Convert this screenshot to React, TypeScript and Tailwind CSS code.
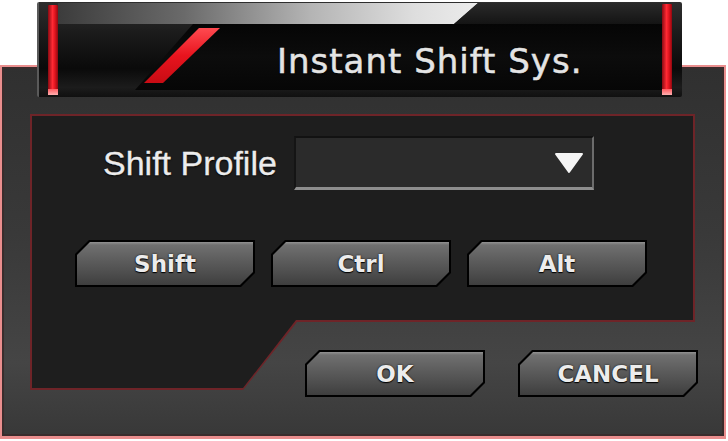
import React from "react";

function Btn({ label }: { label: string }) {
  return (
    <div className="w-[180px] h-[47px] shrink-0 bg-black p-[2px] [clip-path:polygon(14px_0,100%_0,100%_33px,166px_100%,0_100%,0_14px)]">
      <div className="w-full h-full flex items-center justify-center pt-[2px] bg-[linear-gradient(180deg,#929292_0%,#707070_7%,#5e5e5e_40%,#4c4c4c_75%,#3e3e3e_100%)] [clip-path:polygon(13px_0,100%_0,100%_30px,163px_100%,0_100%,0_13px)]">
        <span className="font-['DejaVu_Sans',sans-serif] font-bold text-[23px] leading-none text-[#ececec] [text-shadow:0_1px_1px_#000,0_0_2px_#111]">
          {label}
        </span>
      </div>
    </div>
  );
}

export default function App() {
  return (
    <div className="relative w-[728px] h-[441px] bg-white overflow-hidden">
      {/* Dialog body */}
      <div className="mt-[65px] w-[726px] h-[374px] box-border border-2 border-b-[3px] border-[#ea8e8e] bg-[linear-gradient(180deg,#303030_0%,#393939_45%,#454545_80%,#383838_100%)] shadow-[inset_0_0_0_2px_#3a2c2c]">
        <div className="pl-[28px] pt-[47px]">
          <div className="relative w-[665px] h-[283px]">
            {/* panel background shape */}
            <div className="absolute left-0 top-0 w-[665px] h-[276px] bg-[#6e2428] p-[2px] [clip-path:polygon(0_0,100%_0,100%_208px,267px_208px,213px_100%,0_100%)]">
              <div className="w-full h-full bg-[#1e1e1e] [clip-path:polygon(0_0,100%_0,100%_204px,264px_204px,211px_100%,0_100%)]" />
            </div>

            <div className="relative flex flex-col">
              {/* Shift profile row */}
              <div className="flex items-center pt-[22px] pl-[73px] gap-[17px]">
                <span className="font-['Liberation_Sans',Arial,sans-serif] text-[34px] leading-none text-[#ececec] [-webkit-text-stroke:0.3px_#ececec] [text-shadow:0_1px_2px_#000]">
                  Shift Profile
                </span>
                <div className="w-[300px] h-[54px] box-border border-t-2 border-l-2 border-t-[#121212] border-l-[#151515] border-b-[3px] border-b-[#8e8e8e] border-r-2 border-r-[#6c6c6c] bg-[#2b2b2b] flex items-center justify-end pr-[8px]">
                  <svg width="30" height="22" viewBox="0 0 30 22">
                    <polygon
                      points="2,2 28,2 15,20"
                      fill="#f5f5f5"
                      stroke="#f5f5f5"
                      strokeWidth="2"
                      strokeLinejoin="round"
                    />
                  </svg>
                </div>
              </div>

              {/* modifier buttons */}
              <div className="flex mt-[50px] pl-[45px] gap-[16px]">
                <Btn label="Shift" />
                <Btn label="Ctrl" />
                <Btn label="Alt" />
              </div>

              {/* OK / CANCEL */}
              <div className="flex mt-[63px] pl-[275px] gap-[33px]">
                <Btn label="OK" />
                <Btn label="CANCEL" />
              </div>
            </div>
          </div>
        </div>
      </div>

      {/* Header bar (lies over the body) */}
      <div className="absolute left-[37px] top-[2px] w-[645px] h-[95px] bg-[linear-gradient(180deg,#2e2e2e_0%,#1a1a1a_35%,#0a0a0a_70%,#1c1c1c_90%,#101010_100%)] border-l-2 border-l-[#5a5a5a] rounded-[2px]">
        {/* silver top band */}
        <div className="absolute left-[19px] top-[1px] w-[420px] h-[21px] bg-[linear-gradient(90deg,#3c3c3c_0%,#6a6a6a_30%,#b4b4b4_60%,#dedede_85%,#ececec_100%)] [clip-path:polygon(0_0,420px_0,396px_100%,0_100%)]" />
        {/* dark area right of the band */}
        <div className="absolute left-[415px] top-[1px] w-[208px] h-[21px] bg-[linear-gradient(180deg,#2a2a2a,#141414)] [clip-path:polygon(24px_0,100%_0,100%_100%,0_100%)]" />
        {/* black inner panel */}
        <div className="absolute left-[96px] top-[22px] w-[527px] h-[66px] bg-[linear-gradient(180deg,#050505_0%,#0c0c0c_50%,#060606_100%)] [clip-path:polygon(58px_0,100%_0,100%_100%,0_100%)]" />
        {/* red slant */}
        <div className="absolute left-[105px] top-[26px] w-[76px] h-[55px] bg-[linear-gradient(180deg,#ff4a50_0%,#e8141e_50%,#c80c14_100%)] [clip-path:polygon(55px_0,76px_0,19px_100%,0_100%)]" />
        {/* left red stripe */}
        <div className="absolute left-[9px] top-[3px] w-[10px] h-[90px] rounded-[1px] bg-[linear-gradient(90deg,#8a0a12_0%,#ff2a34_45%,#e0141e_70%,#900810_100%)]">
          <div className="absolute left-0 bottom-0 w-full h-[6px] bg-[linear-gradient(180deg,#ff5a60,#ffb0b0)]" />
        </div>
        {/* right red stripe */}
        <div className="absolute left-[623px] top-[2px] w-[10px] h-[91px] rounded-[1px] bg-[linear-gradient(90deg,#8a0a12_0%,#ff2a34_45%,#e0141e_70%,#900810_100%)]">
          <div className="absolute left-0 bottom-0 w-full h-[6px] bg-[linear-gradient(180deg,#ff5a60,#ffb0b0)]" />
        </div>

        <div className="relative pl-[238px] pt-[42px]">
          <span className="font-['DejaVu_Sans',sans-serif] text-[34px] leading-[34px] tracking-[1px] text-[#e4e4e4] [-webkit-text-stroke:0.5px_#e4e4e4] [text-shadow:0_1px_2px_#000]">
            Instant Shift Sys.
          </span>
        </div>
      </div>
    </div>
  );
}
